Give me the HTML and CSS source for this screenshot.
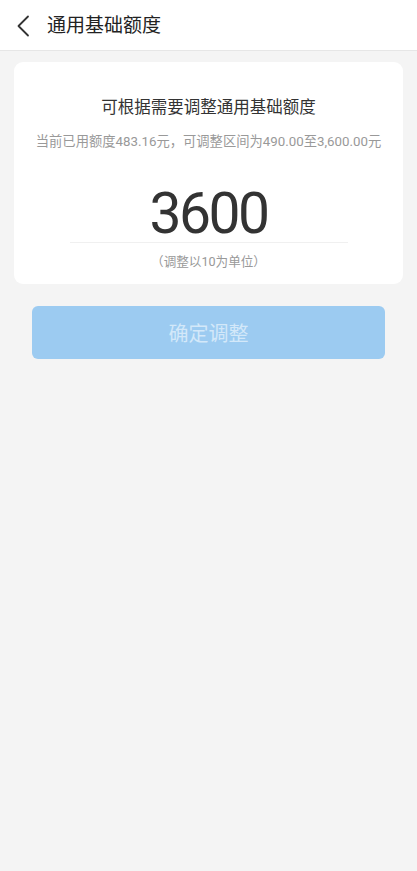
FILE: index.html
```html
<!DOCTYPE html>
<html lang="zh-CN">
<head>
<meta charset="utf-8">
<meta name="viewport" content="width=device-width, initial-scale=1">
<title>通用基础额度</title>
<link rel="stylesheet" href="styles.css">
</head>
<body>
<header class="topbar">
  <span class="back" aria-label="返回">
    <svg width="14" height="22" viewBox="0 0 14 22"><path d="M12 1.5 L2.5 11 L12 20.5" fill="none" stroke="#333" stroke-width="1.8" stroke-linecap="round" stroke-linejoin="round"/></svg>
  </span>
  <h1 class="title">通用基础额度</h1>
</header>
<main class="content">
  <section class="card">
    <p class="card-title">可根据需要调整通用基础额度</p>
    <p class="card-sub">当前已用额度483.16元，可调整区间为490.00至3,600.00元</p>
    <div class="amount">3600</div>
    <p class="hint">（调整以10为单位）</p>
  </section>
  <button class="confirm" type="button">确定调整</button>
</main>
</body>
</html>
```
FILE: styles.css
```css
html, body {
  margin: 0;
  padding: 0;
}
body {
  width: 417px;
  min-height: 871px;
  background: #f4f4f4;
  font-family: Roboto, "Noto Sans CJK SC", sans-serif;
  color: #333;
}
.topbar {
  height: 51px;
  background: #fff;
  border-bottom: 1px solid #e6e6e6;
  display: flex;
  align-items: center;
  box-sizing: border-box;
  padding-left: 16px;
}
.back {
  display: flex;
  width: 14px;
  height: 22px;
  margin-top: 1px;
}
.title {
  margin: 0 0 0 17px;
  font-size: 19px;
  font-weight: 400;
  color: #222;
  line-height: 1;
}
.content {
  padding: 11px 14px 0;
}
.card {
  background: #fff;
  border-radius: 9px;
  padding: 35px 0 13px;
  display: flex;
  flex-direction: column;
  align-items: center;
}
.card-title {
  margin: 0;
  font-size: 16.5px;
  line-height: 22px;
  color: #333;
}
.card-sub {
  margin: 14px 0 0;
  font-size: 13.3px;
  line-height: 18px;
  color: #999;
  white-space: nowrap;
}
.amount {
  margin-top: 35px;
  width: 278px;
  text-align: center;
  font-size: 57px;
  line-height: 56px;
  color: #333;
  border-bottom: 1px solid #f0f0f0;
  letter-spacing: -2.5px;
}
.hint {
  margin: 10px 0 0;
  font-size: 12.6px;
  line-height: 18px;
  color: #999;
}
.confirm {
  display: block;
  margin: 22px 18px 0;
  width: calc(100% - 36px);
  height: 53px;
  border: 0;
  border-radius: 6px;
  background: #9ccbf1;
  color: #d3e8f9;
  font-family: Roboto, "Noto Sans CJK SC", sans-serif;
  font-size: 20px;
  padding: 0;
}
```
